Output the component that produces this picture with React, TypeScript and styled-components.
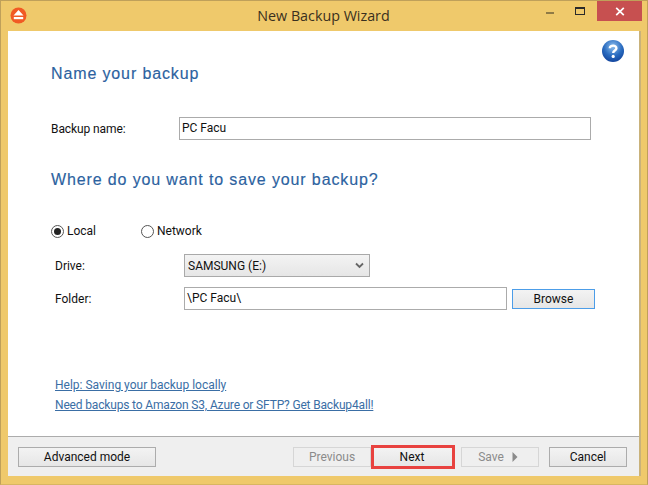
import React from "react";
import styled, { createGlobalStyle } from "styled-components";

const Global = createGlobalStyle`
  html, body { margin: 0; padding: 0; background: #efc96b; }
  #root { width: 648px; height: 485px; }
  * { box-sizing: border-box; }
`;

const Win = styled.div`
  width: 648px; height: 485px; display: flex; flex-direction: column;
  background: #efc96b; border: 1px solid #bfa05a; border-bottom-color: #d8b662;
  font-family: "Roboto", "Noto Sans", sans-serif; font-size: 12px; color: #111;
`;
const TitleBar = styled.div`
  height: 29px; flex: none; display: flex; align-items: flex-start; position: relative;
  padding-left: 9px;
`;
const AppIcon = styled.svg`width: 17px; height: 17px; margin-top: 6px; flex: none;`;
const Title = styled.div`
  position: absolute; left: 0; right: 0; top: 5px; text-align: center;
  font-size: 14.3px; line-height: 20px; color: #3a3020; padding-right: 1px;
  font-family: "Open Sans", sans-serif;
`;
const Controls = styled.div`
  margin-left: auto; display: flex; align-items: flex-start; margin-right: 5px; position: relative;
`;
const Ctl = styled.div<{ $w: number; $bg?: string }>`
  width: ${p => p.$w}px; height: 20px; display: flex; align-items: center; justify-content: center;
  background: ${p => p.$bg ?? "transparent"};
`;
const Client = styled.div`
  flex: 1; margin: 1px 6px 8px 7px; border-right: 2px solid #c9b27a;
  background: #fff; display: flex; flex-direction: column; position: relative;
`;
const Body = styled.div`flex: 1; display: flex; flex-direction: column; padding: 0 0 0 43px; position: relative;`;
const Help = styled.svg`position: absolute; right: 14px; top: 8px; width: 24px; height: 24px;`;
const Heading = styled.h2<{ $mt: number }>`
  margin: ${p => p.$mt}px 0 0 0; font: 400 16px/20px "Liberation Sans", Arial, sans-serif;
  color: #2c62a0; letter-spacing: 0.87px; -webkit-text-stroke: 0.15px #2c62a0;
`;
const NameRow = styled.div`display: flex; align-items: center; margin-top: 33px; height: 23px;`;
const NameLabel = styled.label`width: 128px; flex: none; font-size: 12px; letter-spacing: -0.1px;`;
const TextBox = styled.div<{ $w: number }>`
  width: ${p => p.$w}px; height: 23px; border: 1px solid #ababab; background: #fff;
  padding: 0 2px; font-size: 12px; line-height: 21px; color: #111; flex: none;
`;
const Radios = styled.div`display: flex; align-items: center; margin-top: 32px; height: 18px;`;
const RadioLabel = styled.label<{ $w: number }>`
  display: flex; align-items: center; gap: 3px; width: ${p => p.$w}px; font-size: 12px;
`;
const Dot = styled.span<{ $on?: boolean }>`
  width: 13px; height: 13px; border-radius: 50%; border: 1px solid #555; background: #fff;
  display: flex; align-items: center; justify-content: center; flex: none;
  &::after { content: ""; width: 7px; height: 7px; border-radius: 50%; background: ${p => (p.$on ? "#222" : "transparent")}; }
`;
const FormRow = styled.div<{ $mt: number }>`
  display: flex; align-items: center; padding-left: 4px; margin-top: ${p => p.$mt}px; height: 23px;
`;
const FormLabel = styled.label`width: 129px; flex: none; font-size: 12px;`;
const Select = styled.div`
  width: 186px; height: 23px; border: 1px solid #a9a9a9; flex: none;
  background: linear-gradient(#f3f3f3, #e6e6e6); display: flex; align-items: center;
  justify-content: space-between; padding: 0 5px 0 3px; font-size: 12px;
`;
const BrowseBtn = styled.div`
  margin-left: 5px; width: 83px; height: 20px; border: 1px solid #4c9de8; flex: none;
  background: linear-gradient(#f3f3f3, #e6e6e6); text-align: center; line-height: 18px; font-size: 12px;
`;
const Links = styled.div`display: flex; flex-direction: column; gap: 3px; margin-top: 67px; padding-left: 4px;`;
const Link = styled.a<{ $tight?: boolean }>`
  font-size: 12px; line-height: 17px; color: #3a6ea5; text-decoration: underline;
  letter-spacing: ${p => (p.$tight ? "-0.16px" : "0")};
`;
const Footer = styled.div`
  height: 40px; flex: none; background: #efefef; border-top: 1px solid #acacac;
  display: flex; align-items: flex-start; padding: 10px 0 0 10px;
`;
const Btn = styled.div<{ $w: number; $dis?: boolean; $ml?: number }>`
  width: ${p => p.$w}px; height: 20px; flex: none; margin-left: ${p => p.$ml ?? 0}px;
  border: 1px solid ${p => (p.$dis ? "#d6d6d6" : "#acacac")};
  background: ${p => (p.$dis ? "#efefef" : "linear-gradient(#f3f3f3, #e6e6e6)")};
  color: ${p => (p.$dis ? "#8b8b8b" : "#111")};
  display: flex; align-items: center; justify-content: center; gap: 8px; font-size: 12px; line-height: 16px;
`;
const NextBtn = styled(Btn)`
  height: 24px; margin-top: -2px; border: 3px solid #e8423f; padding-right: 2px;
`;
const SaveBtn = styled(Btn)`
  padding-right: 4px;
`;

export default function App() {
  return (
    <>
      <Global />
      <Win>
        <TitleBar>
          <AppIcon viewBox="0 0 17 17">
            <circle cx="8.5" cy="8.5" r="8" fill="#f15a24" />
            <path d="M8.5 3 L13.5 8.4 H3.5 Z" fill="#fff" />
            <rect x="3.8" y="10" width="9.4" height="2.2" fill="#fff" />
          </AppIcon>
          <Title>New Backup Wizard</Title>
          <Controls>
            <Ctl $w={26}>
              <svg width="9" height="9" viewBox="0 0 9 9"><rect x="0" y="5" width="8" height="2" fill="#8f7a45" /></svg>
            </Ctl>
            <Ctl $w={34}>
              <svg width="11" height="9" viewBox="0 0 11 9"><rect x="0.5" y="0.5" width="9" height="7" fill="none" stroke="#2a2a2a" /><rect x="0" y="0" width="10" height="2" fill="#2a2a2a" /></svg>
            </Ctl>
            <Ctl $w={45} $bg="#c75050">
              <svg width="10" height="9" viewBox="0 0 10 9"><path d="M1.2 0.8 L8.8 8.2 M8.8 0.8 L1.2 8.2" stroke="#fff" strokeWidth="1.7" /></svg>
            </Ctl>
          </Controls>
        </TitleBar>
        <Client>
          <Body>
            <Help viewBox="0 0 24 24">
              <defs>
                <radialGradient id="hg" cx="50%" cy="30%" r="75%">
                  <stop offset="0" stopColor="#8fc0ee" />
                  <stop offset="0.55" stopColor="#2a6cc0" />
                  <stop offset="1" stopColor="#0f3f98" />
                </radialGradient>
              </defs>
              <circle cx="12" cy="12" r="11" fill="url(#hg)" />
              <path d="M8.8 9.2 C8.8 5.8 15.6 5.8 15.4 9.4 C15.3 11.6 12.3 11.6 12.2 14" fill="none" stroke="#fff" strokeWidth="2.4" />
              <circle cx="12.2" cy="17.4" r="1.6" fill="#fff" />
            </Help>
            <Heading $mt={33}>Name your backup</Heading>
            <NameRow>
              <NameLabel>Backup name:</NameLabel>
              <TextBox $w={412}>PC Facu</TextBox>
            </NameRow>
            <Heading $mt={30}>Where do you want to save your backup?</Heading>
            <Radios>
              <RadioLabel $w={90}><Dot $on />Local</RadioLabel>
              <RadioLabel $w={90}><Dot />Network</RadioLabel>
            </Radios>
            <FormRow $mt={14}>
              <FormLabel>Drive:</FormLabel>
              <Select>
                SAMSUNG (E:)
                <svg width="9" height="7" viewBox="0 0 9 7"><path d="M1 1.5 L4.5 5 L8 1.5" fill="none" stroke="#666" strokeWidth="1.8" /></svg>
              </Select>
            </FormRow>
            <FormRow $mt={10}>
              <FormLabel>Folder:</FormLabel>
              <TextBox $w={323}>\PC Facu\</TextBox>
              <BrowseBtn>Browse</BrowseBtn>
            </FormRow>
            <Links>
              <Link>Help: Saving your backup locally</Link>
              <Link $tight>Need backups to Amazon S3, Azure or SFTP? Get Backup4all!</Link>
            </Links>
          </Body>
          <Footer>
            <Btn $w={138}>Advanced mode</Btn>
            <Btn $w={78} $dis $ml={137}>Previous</Btn>
            <NextBtn $w={84}>Next</NextBtn>
            <SaveBtn $w={78} $dis $ml={6}>
              Save
              <svg width="6" height="10" viewBox="0 0 6 10"><path d="M0.5 0 L5.5 5 L0.5 10 Z" fill="#8b8b8b" /></svg>
            </SaveBtn>
            <Btn $w={78} $ml={10}>Cancel</Btn>
          </Footer>
        </Client>
      </Win>
    </>
  );
}
